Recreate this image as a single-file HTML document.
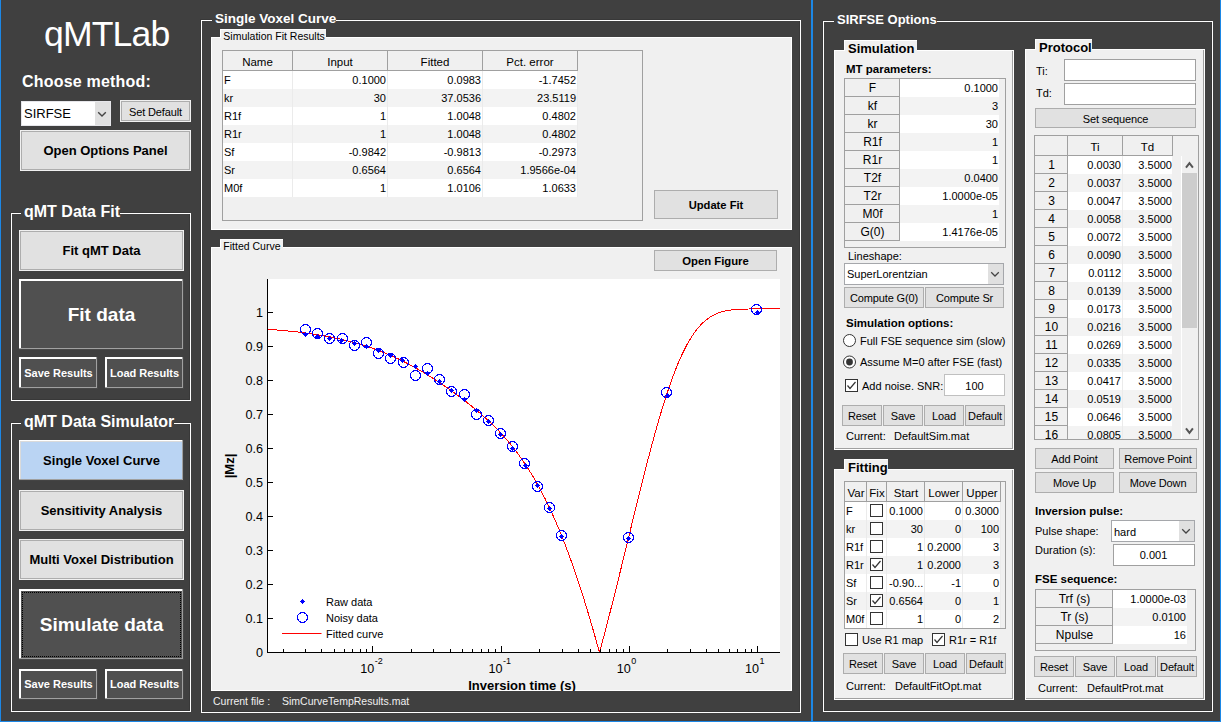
<!DOCTYPE html><html><head><meta charset="utf-8"><style>
html,body{margin:0;padding:0;}
body{width:1221px;height:722px;overflow:hidden;background:#404040;position:relative;font-family:"Liberation Sans", sans-serif;}
.t{position:absolute;white-space:nowrap;}
.r{position:absolute;}
</style></head><body>
<div class="r" style="left:0px;top:0px;width:1px;height:722px;background:#1c87e5;"></div>
<div class="r" style="left:811px;top:0px;width:2px;height:722px;background:#1c87e5;"></div>
<div class="r" style="left:1220px;top:0px;width:1px;height:722px;background:#1c87e5;"></div>
<div class="r" style="left:0px;top:721px;width:1221px;height:1px;background:#1c87e5;"></div>
<div class="t" style="left:44px;top:17.00px;font-size:35.6px;line-height:35.6px;font-weight:normal;color:#fff;letter-spacing:-0.85px">qMTLab</div>
<div class="t" style="left:22px;top:74.00px;font-size:16px;line-height:16px;font-weight:bold;color:#fff;letter-spacing:0.2px">Choose method:</div>
<div class="r" style="left:21px;top:101px;width:90px;height:25px;background:#e6e6ea;"></div>
<div class="r" style="left:22px;top:102px;width:88px;height:23px;background:#fff;"></div>
<div class="r" style="left:95px;top:102px;width:15px;height:23px;background:#e0e0e0;"></div>
<svg class="r" style="left:95px;top:108px" width="14" height="12"><polyline points="3.2,4.2 7,8 10.8,4.2" fill="none" stroke="#444" stroke-width="1.4"/></svg>
<div class="t" style="left:24px;top:107.00px;font-size:13px;line-height:13px;font-weight:normal;color:#000;">SIRFSE</div>
<div class="r" style="left:120px;top:100px;width:71px;height:22px;background:#f0f0f0;"></div>
<div class="r" style="left:121px;top:101px;width:69px;height:20px;background:#adadad;"></div>
<div class="r" style="left:122px;top:102px;width:67px;height:18px;background:#e1e1e1;"></div>
<div class="t" style="left:-44.5px;width:400px;top:107.00px;font-size:11px;line-height:11px;font-weight:normal;color:#000;text-align:center;letter-spacing:-0.15px;">Set Default</div>
<div class="r" style="left:20px;top:130px;width:171px;height:41px;background:#f0f0f0;"></div>
<div class="r" style="left:21px;top:131px;width:169px;height:39px;background:#adadad;"></div>
<div class="r" style="left:22px;top:132px;width:167px;height:37px;background:#e1e1e1;"></div>
<div class="t" style="left:-94.5px;width:400px;top:144.00px;font-size:13px;line-height:13px;font-weight:bold;color:#000;text-align:center;">Open Options Panel</div>
<div class="r" style="left:10px;top:212px;width:180px;height:188px;border:1px solid #383838;box-sizing:border-box;"></div>
<div class="r" style="left:11px;top:213px;width:180px;height:188px;border:1px solid #fff;box-sizing:border-box;"></div>
<div class="t" style="left:21px;top:204.00px;font-size:16px;line-height:16px;font-weight:bold;color:#fff;background:#404040;padding-left:3px;">qMT Data Fit</div>
<div class="r" style="left:19px;top:230px;width:165px;height:41px;background:#f0f0f0;"></div>
<div class="r" style="left:20px;top:231px;width:163px;height:39px;background:#adadad;"></div>
<div class="r" style="left:21px;top:232px;width:161px;height:37px;background:#e1e1e1;"></div>
<div class="t" style="left:-98.5px;width:400px;top:244.00px;font-size:13px;line-height:13px;font-weight:bold;color:#000;text-align:center;">Fit qMT Data</div>
<div class="r" style="left:19px;top:279px;width:165px;height:71px;background:#474747;"></div>
<div class="r" style="left:19px;top:279px;width:164px;height:70px;background:#a0a0a0;"></div>
<div class="r" style="left:19px;top:279px;width:163px;height:69px;background:#ffffff;"></div>
<div class="r" style="left:21px;top:281px;width:161px;height:67px;background:#505050;"></div>
<div class="t" style="left:-98.5px;width:400px;top:305.00px;font-size:19px;line-height:19px;font-weight:bold;color:#fff;text-align:center;">Fit data</div>
<div class="r" style="left:19px;top:357px;width:79px;height:32px;background:#474747;"></div>
<div class="r" style="left:19px;top:357px;width:78px;height:31px;background:#a0a0a0;"></div>
<div class="r" style="left:19px;top:357px;width:77px;height:30px;background:#ffffff;"></div>
<div class="r" style="left:21px;top:359px;width:75px;height:28px;background:#505050;"></div>
<div class="t" style="left:-141.5px;width:400px;top:368.00px;font-size:11px;line-height:11px;font-weight:bold;color:#fff;text-align:center;">Save Results</div>
<div class="r" style="left:105px;top:357px;width:79px;height:32px;background:#474747;"></div>
<div class="r" style="left:105px;top:357px;width:78px;height:31px;background:#a0a0a0;"></div>
<div class="r" style="left:105px;top:357px;width:77px;height:30px;background:#ffffff;"></div>
<div class="r" style="left:107px;top:359px;width:75px;height:28px;background:#505050;"></div>
<div class="t" style="left:-55.5px;width:400px;top:368.00px;font-size:11px;line-height:11px;font-weight:bold;color:#fff;text-align:center;">Load Results</div>
<div class="r" style="left:10px;top:422px;width:180px;height:289px;border:1px solid #383838;box-sizing:border-box;"></div>
<div class="r" style="left:11px;top:423px;width:180px;height:289px;border:1px solid #fff;box-sizing:border-box;"></div>
<div class="t" style="left:21px;top:414.00px;font-size:16px;line-height:16px;font-weight:bold;color:#fff;background:#404040;padding-left:3px;">qMT Data Simulator</div>
<div class="r" style="left:19px;top:440px;width:165px;height:41px;background:#444;"></div>
<div class="r" style="left:19px;top:440px;width:164px;height:40px;background:#a0a0a0;"></div>
<div class="r" style="left:19px;top:440px;width:163px;height:39px;background:#fff;"></div>
<div class="r" style="left:20px;top:441px;width:162px;height:38px;background:#dadada;"></div>
<div class="r" style="left:21px;top:442px;width:161px;height:37px;background:#bad4f3;"></div>
<div class="t" style="left:-98.5px;width:400px;top:454.00px;font-size:13px;line-height:13px;font-weight:bold;color:#000;text-align:center;">Single Voxel Curve</div>
<div class="r" style="left:19px;top:490px;width:165px;height:41px;background:#f0f0f0;"></div>
<div class="r" style="left:20px;top:491px;width:163px;height:39px;background:#adadad;"></div>
<div class="r" style="left:21px;top:492px;width:161px;height:37px;background:#e1e1e1;"></div>
<div class="t" style="left:-98.5px;width:400px;top:504.00px;font-size:13px;line-height:13px;font-weight:bold;color:#000;text-align:center;">Sensitivity Analysis</div>
<div class="r" style="left:19px;top:539px;width:165px;height:41px;background:#f0f0f0;"></div>
<div class="r" style="left:20px;top:540px;width:163px;height:39px;background:#adadad;"></div>
<div class="r" style="left:21px;top:541px;width:161px;height:37px;background:#e1e1e1;"></div>
<div class="t" style="left:-98.5px;width:400px;top:553.00px;font-size:13px;line-height:13px;font-weight:bold;color:#000;text-align:center;">Multi Voxel Distribution</div>
<div class="r" style="left:19px;top:589px;width:165px;height:71px;background:#474747;"></div>
<div class="r" style="left:19px;top:589px;width:164px;height:70px;background:#a0a0a0;"></div>
<div class="r" style="left:19px;top:589px;width:163px;height:69px;background:#ffffff;"></div>
<div class="r" style="left:21px;top:591px;width:161px;height:67px;background:#505050;"></div>
<div class="r" style="left:22px;top:592px;width:159px;height:65px;border:1px dotted #000;box-sizing:border-box;"></div>
<div class="t" style="left:-98.5px;width:400px;top:615.00px;font-size:19px;line-height:19px;font-weight:bold;color:#fff;text-align:center;">Simulate data</div>
<div class="r" style="left:19px;top:669px;width:79px;height:31px;background:#474747;"></div>
<div class="r" style="left:19px;top:669px;width:78px;height:30px;background:#a0a0a0;"></div>
<div class="r" style="left:19px;top:669px;width:77px;height:29px;background:#ffffff;"></div>
<div class="r" style="left:21px;top:671px;width:75px;height:27px;background:#505050;"></div>
<div class="t" style="left:-141.5px;width:400px;top:679.00px;font-size:11px;line-height:11px;font-weight:bold;color:#fff;text-align:center;">Save Results</div>
<div class="r" style="left:105px;top:669px;width:79px;height:31px;background:#474747;"></div>
<div class="r" style="left:105px;top:669px;width:78px;height:30px;background:#a0a0a0;"></div>
<div class="r" style="left:105px;top:669px;width:77px;height:29px;background:#ffffff;"></div>
<div class="r" style="left:107px;top:671px;width:75px;height:27px;background:#505050;"></div>
<div class="t" style="left:-55.5px;width:400px;top:679.00px;font-size:11px;line-height:11px;font-weight:bold;color:#fff;text-align:center;">Load Results</div>
<div class="r" style="left:200px;top:19px;width:600px;height:693px;border:1px solid #383838;box-sizing:border-box;"></div>
<div class="r" style="left:201px;top:20px;width:600px;height:693px;border:1px solid #fff;box-sizing:border-box;"></div>
<div class="t" style="left:212px;top:12.00px;font-size:13.5px;line-height:13.5px;font-weight:bold;color:#fff;background:#404040;padding-left:3px;">Single Voxel Curve</div>
<div class="r" style="left:211px;top:37px;width:581px;height:193px;background:#fff;"></div>
<div class="r" style="left:212px;top:38px;width:579px;height:191px;background:#f0f0f0;"></div>
<div class="r" style="left:220px;top:29px;width:106px;height:9px;background:#fff;"></div>
<div class="r" style="left:221px;top:30px;width:105px;height:9px;background:#f0f0f0;"></div>
<div class="t" style="left:223.3px;top:31.00px;font-size:10.5px;line-height:10.5px;font-weight:normal;color:#000;">Simulation Fit Results</div>
<div class="r" style="left:222px;top:50px;width:421px;height:171px;background:#f0f0f0;border:1px solid #a0a0a0;box-sizing:border-box;"></div>
<div class="r" style="left:223px;top:51px;width:355px;height:19px;background:#f0f0f0;"></div>
<div class="r" style="left:223px;top:70px;width:355px;height:1px;background:#a0a0a0;"></div>
<div class="r" style="left:292px;top:51px;width:1px;height:19px;background:#a0a0a0;"></div>
<div class="t" style="left:57.5px;width:400px;top:57.00px;font-size:11.5px;line-height:11.5px;font-weight:normal;color:#000;text-align:center;">Name</div>
<div class="r" style="left:387px;top:51px;width:1px;height:19px;background:#a0a0a0;"></div>
<div class="t" style="left:140.0px;width:400px;top:57.00px;font-size:11.5px;line-height:11.5px;font-weight:normal;color:#000;text-align:center;">Input</div>
<div class="r" style="left:482px;top:51px;width:1px;height:19px;background:#a0a0a0;"></div>
<div class="t" style="left:235.0px;width:400px;top:57.00px;font-size:11.5px;line-height:11.5px;font-weight:normal;color:#000;text-align:center;">Fitted</div>
<div class="r" style="left:577px;top:51px;width:1px;height:19px;background:#a0a0a0;"></div>
<div class="t" style="left:330.0px;width:400px;top:57.00px;font-size:11.5px;line-height:11.5px;font-weight:normal;color:#000;text-align:center;">Pct. error</div>
<div class="r" style="left:223px;top:71px;width:355px;height:18px;background:#ffffff;"></div>
<div class="r" style="left:292px;top:71px;width:1px;height:18px;background:#ebebeb;"></div>
<div class="r" style="left:387px;top:71px;width:1px;height:18px;background:#ebebeb;"></div>
<div class="r" style="left:482px;top:71px;width:1px;height:18px;background:#ebebeb;"></div>
<div class="r" style="left:577px;top:71px;width:1px;height:18px;background:#ebebeb;"></div>
<div class="t" style="left:224px;top:75.00px;font-size:11px;line-height:11px;font-weight:normal;color:#000;">F</div>
<div class="t" style="right:835px;top:75.00px;font-size:11px;line-height:11px;font-weight:normal;color:#000;text-align:right;">0.1000</div>
<div class="t" style="right:740px;top:75.00px;font-size:11px;line-height:11px;font-weight:normal;color:#000;text-align:right;">0.0983</div>
<div class="t" style="right:645px;top:75.00px;font-size:11px;line-height:11px;font-weight:normal;color:#000;text-align:right;">-1.7452</div>
<div class="r" style="left:223px;top:89px;width:355px;height:18px;background:#f3f3f3;"></div>
<div class="r" style="left:292px;top:89px;width:1px;height:18px;background:#ebebeb;"></div>
<div class="r" style="left:387px;top:89px;width:1px;height:18px;background:#ebebeb;"></div>
<div class="r" style="left:482px;top:89px;width:1px;height:18px;background:#ebebeb;"></div>
<div class="r" style="left:577px;top:89px;width:1px;height:18px;background:#ebebeb;"></div>
<div class="t" style="left:224px;top:93.00px;font-size:11px;line-height:11px;font-weight:normal;color:#000;">kr</div>
<div class="t" style="right:835px;top:93.00px;font-size:11px;line-height:11px;font-weight:normal;color:#000;text-align:right;">30</div>
<div class="t" style="right:740px;top:93.00px;font-size:11px;line-height:11px;font-weight:normal;color:#000;text-align:right;">37.0536</div>
<div class="t" style="right:645px;top:93.00px;font-size:11px;line-height:11px;font-weight:normal;color:#000;text-align:right;">23.5119</div>
<div class="r" style="left:223px;top:107px;width:355px;height:18px;background:#ffffff;"></div>
<div class="r" style="left:292px;top:107px;width:1px;height:18px;background:#ebebeb;"></div>
<div class="r" style="left:387px;top:107px;width:1px;height:18px;background:#ebebeb;"></div>
<div class="r" style="left:482px;top:107px;width:1px;height:18px;background:#ebebeb;"></div>
<div class="r" style="left:577px;top:107px;width:1px;height:18px;background:#ebebeb;"></div>
<div class="t" style="left:224px;top:111.00px;font-size:11px;line-height:11px;font-weight:normal;color:#000;">R1f</div>
<div class="t" style="right:835px;top:111.00px;font-size:11px;line-height:11px;font-weight:normal;color:#000;text-align:right;">1</div>
<div class="t" style="right:740px;top:111.00px;font-size:11px;line-height:11px;font-weight:normal;color:#000;text-align:right;">1.0048</div>
<div class="t" style="right:645px;top:111.00px;font-size:11px;line-height:11px;font-weight:normal;color:#000;text-align:right;">0.4802</div>
<div class="r" style="left:223px;top:125px;width:355px;height:18px;background:#f3f3f3;"></div>
<div class="r" style="left:292px;top:125px;width:1px;height:18px;background:#ebebeb;"></div>
<div class="r" style="left:387px;top:125px;width:1px;height:18px;background:#ebebeb;"></div>
<div class="r" style="left:482px;top:125px;width:1px;height:18px;background:#ebebeb;"></div>
<div class="r" style="left:577px;top:125px;width:1px;height:18px;background:#ebebeb;"></div>
<div class="t" style="left:224px;top:129.00px;font-size:11px;line-height:11px;font-weight:normal;color:#000;">R1r</div>
<div class="t" style="right:835px;top:129.00px;font-size:11px;line-height:11px;font-weight:normal;color:#000;text-align:right;">1</div>
<div class="t" style="right:740px;top:129.00px;font-size:11px;line-height:11px;font-weight:normal;color:#000;text-align:right;">1.0048</div>
<div class="t" style="right:645px;top:129.00px;font-size:11px;line-height:11px;font-weight:normal;color:#000;text-align:right;">0.4802</div>
<div class="r" style="left:223px;top:143px;width:355px;height:18px;background:#ffffff;"></div>
<div class="r" style="left:292px;top:143px;width:1px;height:18px;background:#ebebeb;"></div>
<div class="r" style="left:387px;top:143px;width:1px;height:18px;background:#ebebeb;"></div>
<div class="r" style="left:482px;top:143px;width:1px;height:18px;background:#ebebeb;"></div>
<div class="r" style="left:577px;top:143px;width:1px;height:18px;background:#ebebeb;"></div>
<div class="t" style="left:224px;top:147.00px;font-size:11px;line-height:11px;font-weight:normal;color:#000;">Sf</div>
<div class="t" style="right:835px;top:147.00px;font-size:11px;line-height:11px;font-weight:normal;color:#000;text-align:right;">-0.9842</div>
<div class="t" style="right:740px;top:147.00px;font-size:11px;line-height:11px;font-weight:normal;color:#000;text-align:right;">-0.9813</div>
<div class="t" style="right:645px;top:147.00px;font-size:11px;line-height:11px;font-weight:normal;color:#000;text-align:right;">-0.2973</div>
<div class="r" style="left:223px;top:161px;width:355px;height:18px;background:#f3f3f3;"></div>
<div class="r" style="left:292px;top:161px;width:1px;height:18px;background:#ebebeb;"></div>
<div class="r" style="left:387px;top:161px;width:1px;height:18px;background:#ebebeb;"></div>
<div class="r" style="left:482px;top:161px;width:1px;height:18px;background:#ebebeb;"></div>
<div class="r" style="left:577px;top:161px;width:1px;height:18px;background:#ebebeb;"></div>
<div class="t" style="left:224px;top:165.00px;font-size:11px;line-height:11px;font-weight:normal;color:#000;">Sr</div>
<div class="t" style="right:835px;top:165.00px;font-size:11px;line-height:11px;font-weight:normal;color:#000;text-align:right;">0.6564</div>
<div class="t" style="right:740px;top:165.00px;font-size:11px;line-height:11px;font-weight:normal;color:#000;text-align:right;">0.6564</div>
<div class="t" style="right:645px;top:165.00px;font-size:11px;line-height:11px;font-weight:normal;color:#000;text-align:right;">1.9566e-04</div>
<div class="r" style="left:223px;top:179px;width:355px;height:18px;background:#ffffff;"></div>
<div class="r" style="left:292px;top:179px;width:1px;height:18px;background:#ebebeb;"></div>
<div class="r" style="left:387px;top:179px;width:1px;height:18px;background:#ebebeb;"></div>
<div class="r" style="left:482px;top:179px;width:1px;height:18px;background:#ebebeb;"></div>
<div class="r" style="left:577px;top:179px;width:1px;height:18px;background:#ebebeb;"></div>
<div class="t" style="left:224px;top:183.00px;font-size:11px;line-height:11px;font-weight:normal;color:#000;">M0f</div>
<div class="t" style="right:835px;top:183.00px;font-size:11px;line-height:11px;font-weight:normal;color:#000;text-align:right;">1</div>
<div class="t" style="right:740px;top:183.00px;font-size:11px;line-height:11px;font-weight:normal;color:#000;text-align:right;">1.0106</div>
<div class="t" style="right:645px;top:183.00px;font-size:11px;line-height:11px;font-weight:normal;color:#000;text-align:right;">1.0633</div>
<div class="r" style="left:654px;top:190px;width:124px;height:29px;background:#adadad;"></div>
<div class="r" style="left:655px;top:191px;width:122px;height:27px;background:#e1e1e1;"></div>
<div class="t" style="left:516.0px;width:400px;top:200.00px;font-size:11.2px;line-height:11.2px;font-weight:bold;color:#000;text-align:center;">Update Fit</div>
<div class="r" style="left:211px;top:247px;width:581px;height:444px;background:#fff;"></div>
<div class="r" style="left:212px;top:248px;width:579px;height:442px;background:#f0f0f0;"></div>
<div class="r" style="left:220px;top:239px;width:63px;height:9px;background:#fff;"></div>
<div class="r" style="left:221px;top:240px;width:62px;height:9px;background:#f0f0f0;"></div>
<div class="t" style="left:223.3px;top:241.00px;font-size:10.5px;line-height:10.5px;font-weight:normal;color:#000;">Fitted Curve</div>
<div class="r" style="left:654px;top:250px;width:123px;height:21px;background:#adadad;"></div>
<div class="r" style="left:655px;top:251px;width:121px;height:19px;background:#e1e1e1;"></div>
<div class="t" style="left:515.5px;width:400px;top:256.00px;font-size:11.3px;line-height:11.3px;font-weight:bold;color:#000;text-align:center;">Open Figure</div>
<div class="t" style="left:213px;top:696.00px;font-size:10.5px;line-height:10.5px;font-weight:normal;color:#f0f0f0;">Current file :</div>
<div class="t" style="left:282px;top:696.00px;font-size:10.5px;line-height:10.5px;font-weight:normal;color:#f0f0f0;">SimCurveTempResults.mat</div>
<div class="r" style="left:0;top:0;width:1221px;height:691px;overflow:hidden"><svg class="r" style="left:0;top:0" width="1221" height="722" font-family='"Liberation Sans", sans-serif'><rect x="267" y="279" width="513" height="374" fill="#fff"/><clipPath id="ax"><rect x="267" y="279" width="513" height="373"/></clipPath><path d="M266.63,329.23 L267.49,329.29 L268.35,329.35 L269.20,329.41 L270.06,329.47 L270.92,329.54 L271.77,329.60 L272.63,329.66 L273.49,329.73 L274.34,329.80 L275.20,329.86 L276.05,329.93 L276.91,330.00 L277.77,330.07 L278.62,330.14 L279.48,330.22 L280.34,330.29 L281.19,330.36 L282.05,330.44 L282.91,330.51 L283.76,330.59 L284.62,330.67 L285.48,330.75 L286.33,330.83 L287.19,330.91 L288.04,331.00 L288.90,331.08 L289.76,331.17 L290.61,331.26 L291.47,331.34 L292.33,331.43 L293.18,331.53 L294.04,331.62 L294.90,331.71 L295.75,331.81 L296.61,331.90 L297.47,332.00 L298.32,332.10 L299.18,332.20 L300.03,332.30 L300.89,332.40 L301.75,332.51 L302.60,332.62 L303.46,332.72 L304.32,332.83 L305.17,332.94 L306.03,333.06 L306.89,333.17 L307.74,333.29 L308.60,333.40 L309.46,333.52 L310.31,333.64 L311.17,333.76 L312.02,333.89 L312.88,334.01 L313.74,334.14 L314.59,334.27 L315.45,334.40 L316.31,334.53 L317.16,334.67 L318.02,334.80 L318.88,334.94 L319.73,335.08 L320.59,335.22 L321.45,335.37 L322.30,335.51 L323.16,335.66 L324.01,335.81 L324.87,335.96 L325.73,336.12 L326.58,336.27 L327.44,336.43 L328.30,336.59 L329.15,336.75 L330.01,336.92 L330.87,337.08 L331.72,337.25 L332.58,337.42 L333.44,337.59 L334.29,337.77 L335.15,337.95 L336.00,338.13 L336.86,338.31 L337.72,338.50 L338.57,338.68 L339.43,338.87 L340.29,339.06 L341.14,339.26 L342.00,339.46 L342.86,339.66 L343.71,339.86 L344.57,340.06 L345.43,340.27 L346.28,340.48 L347.14,340.69 L347.99,340.91 L348.85,341.12 L349.71,341.34 L350.56,341.57 L351.42,341.79 L352.28,342.02 L353.13,342.25 L353.99,342.49 L354.85,342.72 L355.70,342.96 L356.56,343.21 L357.42,343.45 L358.27,343.70 L359.13,343.95 L359.98,344.21 L360.84,344.47 L361.70,344.73 L362.55,344.99 L363.41,345.26 L364.27,345.53 L365.12,345.80 L365.98,346.08 L366.84,346.36 L367.69,346.64 L368.55,346.92 L369.40,347.21 L370.26,347.51 L371.12,347.80 L371.97,348.10 L372.83,348.40 L373.69,348.71 L374.54,349.02 L375.40,349.33 L376.26,349.64 L377.11,349.96 L377.97,350.28 L378.83,350.61 L379.68,350.94 L380.54,351.27 L381.39,351.61 L382.25,351.95 L383.11,352.29 L383.96,352.64 L384.82,352.99 L385.68,353.34 L386.53,353.70 L387.39,354.06 L388.25,354.42 L389.10,354.79 L389.96,355.16 L390.82,355.53 L391.67,355.91 L392.53,356.29 L393.38,356.68 L394.24,357.07 L395.10,357.46 L395.95,357.86 L396.81,358.26 L397.67,358.66 L398.52,359.07 L399.38,359.48 L400.24,359.89 L401.09,360.31 L401.95,360.73 L402.81,361.15 L403.66,361.58 L404.52,362.02 L405.37,362.45 L406.23,362.89 L407.09,363.33 L407.94,363.78 L408.80,364.23 L409.66,364.68 L410.51,365.14 L411.37,365.60 L412.23,366.07 L413.08,366.53 L413.94,367.00 L414.80,367.48 L415.65,367.96 L416.51,368.44 L417.36,368.92 L418.22,369.41 L419.08,369.90 L419.93,370.40 L420.79,370.90 L421.65,371.40 L422.50,371.91 L423.36,372.42 L424.22,372.93 L425.07,373.44 L425.93,373.96 L426.79,374.48 L427.64,375.01 L428.50,375.54 L429.35,376.07 L430.21,376.60 L431.07,377.14 L431.92,377.68 L432.78,378.23 L433.64,378.78 L434.49,379.33 L435.35,379.88 L436.21,380.44 L437.06,381.00 L437.92,381.56 L438.78,382.13 L439.63,382.70 L440.49,383.27 L441.34,383.85 L442.20,384.42 L443.06,385.00 L443.91,385.59 L444.77,386.18 L445.63,386.77 L446.48,387.36 L447.34,387.96 L448.20,388.56 L449.05,389.16 L449.91,389.76 L450.77,390.37 L451.62,390.98 L452.48,391.60 L453.33,392.22 L454.19,392.84 L455.05,393.46 L455.90,394.09 L456.76,394.72 L457.62,395.35 L458.47,395.99 L459.33,396.63 L460.19,397.27 L461.04,397.92 L461.90,398.57 L462.76,399.22 L463.61,399.88 L464.47,400.54 L465.32,401.20 L466.18,401.87 L467.04,402.54 L467.89,403.21 L468.75,403.89 L469.61,404.58 L470.46,405.26 L471.32,405.95 L472.18,406.65 L473.03,407.35 L473.89,408.05 L474.75,408.76 L475.60,409.47 L476.46,410.19 L477.31,410.91 L478.17,411.64 L479.03,412.37 L479.88,413.11 L480.74,413.85 L481.60,414.60 L482.45,415.36 L483.31,416.12 L484.17,416.88 L485.02,417.65 L485.88,418.43 L486.74,419.22 L487.59,420.01 L488.45,420.80 L489.30,421.61 L490.16,422.42 L491.02,423.24 L491.87,424.07 L492.73,424.90 L493.59,425.74 L494.44,426.59 L495.30,427.45 L496.16,428.32 L497.01,429.19 L497.87,430.07 L498.73,430.97 L499.58,431.87 L500.44,432.78 L501.29,433.70 L502.15,434.63 L503.01,435.57 L503.86,436.52 L504.72,437.49 L505.58,438.46 L506.43,439.44 L507.29,440.44 L508.15,441.44 L509.00,442.46 L509.86,443.49 L510.72,444.53 L511.57,445.58 L512.43,446.65 L513.28,447.73 L514.14,448.82 L515.00,449.92 L515.85,451.04 L516.71,452.17 L517.57,453.32 L518.42,454.48 L519.28,455.65 L520.14,456.84 L520.99,458.05 L521.85,459.26 L522.71,460.50 L523.56,461.75 L524.42,463.01 L525.27,464.29 L526.13,465.59 L526.99,466.90 L527.84,468.23 L528.70,469.57 L529.56,470.93 L530.41,472.31 L531.27,473.71 L532.13,475.12 L532.98,476.55 L533.84,478.00 L534.70,479.47 L535.55,480.96 L536.41,482.46 L537.26,483.98 L538.12,485.52 L538.98,487.08 L539.83,488.66 L540.69,490.26 L541.55,491.88 L542.40,493.51 L543.26,495.17 L544.12,496.85 L544.97,498.55 L545.83,500.26 L546.69,502.00 L547.54,503.76 L548.40,505.54 L549.25,507.34 L550.11,509.16 L550.97,511.00 L551.82,512.87 L552.68,514.75 L553.54,516.66 L554.39,518.59 L555.25,520.54 L556.11,522.51 L556.96,524.51 L557.82,526.52 L558.68,528.56 L559.53,530.63 L560.39,532.71 L561.24,534.82 L562.10,536.95 L562.96,539.10 L563.81,541.28 L564.67,543.48 L565.53,545.70 L566.38,547.95 L567.24,550.22 L568.10,552.51 L568.95,554.83 L569.81,557.17 L570.67,559.53 L571.52,561.92 L572.38,564.33 L573.23,566.76 L574.09,569.22 L574.95,571.70 L575.80,574.21 L576.66,576.74 L577.52,579.29 L578.37,581.87 L579.23,584.47 L580.09,587.09 L580.94,589.74 L581.80,592.41 L582.66,595.10 L583.51,597.82 L584.37,600.56 L585.22,603.32 L586.08,606.11 L586.94,608.92 L587.79,611.75 L588.65,614.61 L589.51,617.48 L590.36,620.38 L591.22,623.31 L592.08,626.25 L592.93,629.22 L593.79,632.21 L594.65,635.21 L595.50,638.25 L596.36,641.30 L597.21,644.37 L598.07,647.46 L598.93,650.57 L599.45,652.50 L599.78,651.29 L600.64,648.14 L601.50,644.97 L602.35,641.78 L603.21,638.57 L604.07,635.35 L604.92,632.10 L605.78,628.84 L606.64,625.56 L607.49,622.27 L608.35,618.96 L609.20,615.63 L610.06,612.29 L610.92,608.94 L611.77,605.57 L612.63,602.18 L613.49,598.79 L614.34,595.38 L615.20,591.96 L616.06,588.53 L616.91,585.09 L617.77,581.64 L618.63,578.17 L619.48,574.70 L620.34,571.23 L621.19,567.74 L622.05,564.25 L622.91,560.75 L623.76,557.25 L624.62,553.74 L625.48,550.23 L626.33,546.72 L627.19,543.20 L628.05,539.68 L628.90,536.16 L629.76,532.65 L630.62,529.13 L631.47,525.62 L632.33,522.11 L633.18,518.60 L634.04,515.09 L634.90,511.60 L635.75,508.11 L636.61,504.62 L637.47,501.15 L638.32,497.68 L639.18,494.23 L640.04,490.78 L640.89,487.35 L641.75,483.93 L642.61,480.53 L643.46,477.14 L644.32,473.76 L645.17,470.41 L646.03,467.07 L646.89,463.75 L647.74,460.45 L648.60,457.17 L649.46,453.91 L650.31,450.68 L651.17,447.46 L652.03,444.28 L652.88,441.12 L653.74,437.98 L654.60,434.88 L655.45,431.80 L656.31,428.75 L657.16,425.73 L658.02,422.74 L658.88,419.78 L659.73,416.86 L660.59,413.97 L661.45,411.12 L662.30,408.30 L663.16,405.51 L664.02,402.76 L664.87,400.05 L665.73,397.38 L666.59,394.75 L667.44,392.15 L668.30,389.60 L669.15,387.09 L670.01,384.61 L670.87,382.18 L671.72,379.79 L672.58,377.45 L673.44,375.14 L674.29,372.89 L675.15,370.67 L676.01,368.50 L676.86,366.37 L677.72,364.29 L678.58,362.25 L679.43,360.26 L680.29,358.31 L681.14,356.41 L682.00,354.56 L682.86,352.74 L683.71,350.98 L684.57,349.26 L685.43,347.58 L686.28,345.95 L687.14,344.37 L688.00,342.83 L688.85,341.34 L689.71,339.88 L690.57,338.48 L691.42,337.11 L692.28,335.79 L693.13,334.52 L693.99,333.28 L694.85,332.09 L695.70,330.93 L696.56,329.82 L697.42,328.75 L698.27,327.72 L699.13,326.73 L699.99,325.77 L700.84,324.85 L701.70,323.97 L702.56,323.13 L703.41,322.32 L704.27,321.55 L705.12,320.80 L705.98,320.10 L706.84,319.42 L707.69,318.78 L708.55,318.16 L709.41,317.58 L710.26,317.02 L711.12,316.49 L711.98,315.99 L712.83,315.52 L713.69,315.07 L714.55,314.64 L715.40,314.24 L716.26,313.86 L717.11,313.50 L717.97,313.16 L718.83,312.85 L719.68,312.55 L720.54,312.27 L721.40,312.01 L722.25,311.76 L723.11,311.53 L723.97,311.32 L724.82,311.12 L725.68,310.93 L726.54,310.76 L727.39,310.60 L728.25,310.45 L729.10,310.31 L729.96,310.19 L730.82,310.07 L731.67,309.96 L732.53,309.86 L733.39,309.77 L734.24,309.68 L735.10,309.61 L735.96,309.54 L736.81,309.47 L737.67,309.41 L738.53,309.36 L739.38,309.31 L740.24,309.26 L741.09,309.22 L741.95,309.19 L742.81,309.16 L743.66,309.13 L744.52,309.10 L745.38,309.08 L746.23,309.05 L747.09,309.04 L747.95,309.02 L748.80,309.00 L749.66,308.99 L750.52,308.98 L751.37,308.97 L752.23,308.96 L753.08,308.95 L753.94,308.94 L754.80,308.94 L755.65,308.93 L756.51,308.93 L757.37,308.92 L758.22,308.92 L759.08,308.91 L759.94,308.91 L760.79,308.91 L761.65,308.91 L762.51,308.91 L763.36,308.90 L764.22,308.90 L765.07,308.90 L765.93,308.90 L766.79,308.90 L767.64,308.90 L768.50,308.90 L769.36,308.90 L770.21,308.90 L771.07,308.90 L771.93,308.90 L772.78,308.90 L773.64,308.90 L774.50,308.90 L775.35,308.90 L776.21,308.90 L777.06,308.90 L777.92,308.90 L778.78,308.90 L779.63,308.90" fill="none" stroke="#ff0000" stroke-width="1" clip-path="url(#ax)" shape-rendering="crispEdges"/><path d="M305.5,331.9 L308.1,334.5 L305.5,337.1 L302.9,334.5 Z" fill="#0000ff" shape-rendering="crispEdges"/><path d="M317.5,333.9 L320.1,336.5 L317.5,339.1 L314.9,336.5 Z" fill="#0000ff" shape-rendering="crispEdges"/><path d="M329.5,335.9 L332.1,338.5 L329.5,341.1 L326.9,338.5 Z" fill="#0000ff" shape-rendering="crispEdges"/><path d="M341.5,337.9 L344.1,340.5 L341.5,343.1 L338.9,340.5 Z" fill="#0000ff" shape-rendering="crispEdges"/><path d="M354.5,340.9 L357.1,343.5 L354.5,346.1 L351.9,343.5 Z" fill="#0000ff" shape-rendering="crispEdges"/><path d="M366.5,343.9 L369.1,346.5 L366.5,349.1 L363.9,346.5 Z" fill="#0000ff" shape-rendering="crispEdges"/><path d="M378.5,347.9 L381.1,350.5 L378.5,353.1 L375.9,350.5 Z" fill="#0000ff" shape-rendering="crispEdges"/><path d="M390.5,352.9 L393.1,355.5 L390.5,358.1 L387.9,355.5 Z" fill="#0000ff" shape-rendering="crispEdges"/><path d="M402.5,357.9 L405.1,360.5 L402.5,363.1 L399.9,360.5 Z" fill="#0000ff" shape-rendering="crispEdges"/><path d="M415.5,363.9 L418.1,366.5 L415.5,369.1 L412.9,366.5 Z" fill="#0000ff" shape-rendering="crispEdges"/><path d="M427.5,370.9 L430.1,373.5 L427.5,376.1 L424.9,373.5 Z" fill="#0000ff" shape-rendering="crispEdges"/><path d="M439.5,378.9 L442.1,381.5 L439.5,384.1 L436.9,381.5 Z" fill="#0000ff" shape-rendering="crispEdges"/><path d="M451.5,387.9 L454.1,390.5 L451.5,393.1 L448.9,390.5 Z" fill="#0000ff" shape-rendering="crispEdges"/><path d="M464.5,396.9 L467.1,399.5 L464.5,402.1 L461.9,399.5 Z" fill="#0000ff" shape-rendering="crispEdges"/><path d="M476.5,407.9 L479.1,410.5 L476.5,413.1 L473.9,410.5 Z" fill="#0000ff" shape-rendering="crispEdges"/><path d="M488.5,418.9 L491.1,421.5 L488.5,424.1 L485.9,421.5 Z" fill="#0000ff" shape-rendering="crispEdges"/><path d="M500.5,431.9 L503.1,434.5 L500.5,437.1 L497.9,434.5 Z" fill="#0000ff" shape-rendering="crispEdges"/><path d="M512.5,445.9 L515.1,448.5 L512.5,451.1 L509.9,448.5 Z" fill="#0000ff" shape-rendering="crispEdges"/><path d="M525.5,462.9 L528.1,465.5 L525.5,468.1 L522.9,465.5 Z" fill="#0000ff" shape-rendering="crispEdges"/><path d="M537.5,482.9 L540.1,485.5 L537.5,488.1 L534.9,485.5 Z" fill="#0000ff" shape-rendering="crispEdges"/><path d="M549.5,505.9 L552.1,508.5 L549.5,511.1 L546.9,508.5 Z" fill="#0000ff" shape-rendering="crispEdges"/><path d="M561.5,533.9 L564.1,536.5 L561.5,539.1 L558.9,536.5 Z" fill="#0000ff" shape-rendering="crispEdges"/><path d="M628.5,535.9 L631.1,538.5 L628.5,541.1 L625.9,538.5 Z" fill="#0000ff" shape-rendering="crispEdges"/><path d="M667.5,392.9 L670.1,395.5 L667.5,398.1 L664.9,395.5 Z" fill="#0000ff" shape-rendering="crispEdges"/><path d="M757.5,309.9 L760.1,312.5 L757.5,315.1 L754.9,312.5 Z" fill="#0000ff" shape-rendering="crispEdges"/><circle cx="305.5" cy="329.5" r="5" fill="none" stroke="#0000ff" stroke-width="1" shape-rendering="crispEdges"/><circle cx="317.5" cy="333.5" r="5" fill="none" stroke="#0000ff" stroke-width="1" shape-rendering="crispEdges"/><circle cx="329.5" cy="338.5" r="5" fill="none" stroke="#0000ff" stroke-width="1" shape-rendering="crispEdges"/><circle cx="342.5" cy="338.5" r="5" fill="none" stroke="#0000ff" stroke-width="1" shape-rendering="crispEdges"/><circle cx="354.5" cy="345.5" r="5" fill="none" stroke="#0000ff" stroke-width="1" shape-rendering="crispEdges"/><circle cx="366.5" cy="342.5" r="5" fill="none" stroke="#0000ff" stroke-width="1" shape-rendering="crispEdges"/><circle cx="378.5" cy="353.5" r="5" fill="none" stroke="#0000ff" stroke-width="1" shape-rendering="crispEdges"/><circle cx="390.5" cy="358.5" r="5" fill="none" stroke="#0000ff" stroke-width="1" shape-rendering="crispEdges"/><circle cx="403.5" cy="362.5" r="5" fill="none" stroke="#0000ff" stroke-width="1" shape-rendering="crispEdges"/><circle cx="415.5" cy="375.5" r="5" fill="none" stroke="#0000ff" stroke-width="1" shape-rendering="crispEdges"/><circle cx="427.5" cy="368.5" r="5" fill="none" stroke="#0000ff" stroke-width="1" shape-rendering="crispEdges"/><circle cx="439.5" cy="379.5" r="5" fill="none" stroke="#0000ff" stroke-width="1" shape-rendering="crispEdges"/><circle cx="451.5" cy="391.5" r="5" fill="none" stroke="#0000ff" stroke-width="1" shape-rendering="crispEdges"/><circle cx="464.5" cy="394.5" r="5" fill="none" stroke="#0000ff" stroke-width="1" shape-rendering="crispEdges"/><circle cx="476.5" cy="414.5" r="5" fill="none" stroke="#0000ff" stroke-width="1" shape-rendering="crispEdges"/><circle cx="488.5" cy="420.5" r="5" fill="none" stroke="#0000ff" stroke-width="1" shape-rendering="crispEdges"/><circle cx="500.5" cy="433.5" r="5" fill="none" stroke="#0000ff" stroke-width="1" shape-rendering="crispEdges"/><circle cx="512.5" cy="446.5" r="5" fill="none" stroke="#0000ff" stroke-width="1" shape-rendering="crispEdges"/><circle cx="524.5" cy="463.5" r="5" fill="none" stroke="#0000ff" stroke-width="1" shape-rendering="crispEdges"/><circle cx="537.5" cy="486.5" r="5" fill="none" stroke="#0000ff" stroke-width="1" shape-rendering="crispEdges"/><circle cx="549.5" cy="507.5" r="5" fill="none" stroke="#0000ff" stroke-width="1" shape-rendering="crispEdges"/><circle cx="561.5" cy="535.5" r="5" fill="none" stroke="#0000ff" stroke-width="1" shape-rendering="crispEdges"/><circle cx="628.5" cy="537.5" r="5" fill="none" stroke="#0000ff" stroke-width="1" shape-rendering="crispEdges"/><circle cx="666.5" cy="392.5" r="5" fill="none" stroke="#0000ff" stroke-width="1" shape-rendering="crispEdges"/><circle cx="756.5" cy="309.5" r="5" fill="none" stroke="#0000ff" stroke-width="1" shape-rendering="crispEdges"/><path d="M267.5,279 V652.5 H780" fill="none" stroke="#000" stroke-width="1"/><path d="M267,652.5 h6" stroke="#000" stroke-width="1"/><text x="263" y="657.1" font-size="12.6" text-anchor="end" fill="#000">0</text><path d="M267,618.5 h6" stroke="#000" stroke-width="1"/><text x="263" y="623.1" font-size="12.6" text-anchor="end" fill="#000">0.1</text><path d="M267,584.5 h6" stroke="#000" stroke-width="1"/><text x="263" y="589.1" font-size="12.6" text-anchor="end" fill="#000">0.2</text><path d="M267,550.5 h6" stroke="#000" stroke-width="1"/><text x="263" y="555.1" font-size="12.6" text-anchor="end" fill="#000">0.3</text><path d="M267,516.5 h6" stroke="#000" stroke-width="1"/><text x="263" y="521.1" font-size="12.6" text-anchor="end" fill="#000">0.4</text><path d="M267,482.5 h6" stroke="#000" stroke-width="1"/><text x="263" y="487.1" font-size="12.6" text-anchor="end" fill="#000">0.5</text><path d="M267,448.5 h6" stroke="#000" stroke-width="1"/><text x="263" y="453.1" font-size="12.6" text-anchor="end" fill="#000">0.6</text><path d="M267,414.5 h6" stroke="#000" stroke-width="1"/><text x="263" y="419.1" font-size="12.6" text-anchor="end" fill="#000">0.7</text><path d="M267,380.5 h6" stroke="#000" stroke-width="1"/><text x="263" y="385.1" font-size="12.6" text-anchor="end" fill="#000">0.8</text><path d="M267,346.5 h6" stroke="#000" stroke-width="1"/><text x="263" y="351.1" font-size="12.6" text-anchor="end" fill="#000">0.9</text><path d="M267,312.5 h6" stroke="#000" stroke-width="1"/><text x="263" y="317.1" font-size="12.6" text-anchor="end" fill="#000">1</text><path d="M283.5,652 v-3" stroke="#000" stroke-width="1"/><path d="M305.5,652 v-3" stroke="#000" stroke-width="1"/><path d="M321.5,652 v-3" stroke="#000" stroke-width="1"/><path d="M334.5,652 v-3" stroke="#000" stroke-width="1"/><path d="M344.5,652 v-3" stroke="#000" stroke-width="1"/><path d="M352.5,652 v-3" stroke="#000" stroke-width="1"/><path d="M360.5,652 v-3" stroke="#000" stroke-width="1"/><path d="M366.5,652 v-3" stroke="#000" stroke-width="1"/><path d="M372.5,652 v-6" stroke="#000" stroke-width="1"/><path d="M411.5,652 v-3" stroke="#000" stroke-width="1"/><path d="M433.5,652 v-3" stroke="#000" stroke-width="1"/><path d="M450.5,652 v-3" stroke="#000" stroke-width="1"/><path d="M462.5,652 v-3" stroke="#000" stroke-width="1"/><path d="M472.5,652 v-3" stroke="#000" stroke-width="1"/><path d="M481.5,652 v-3" stroke="#000" stroke-width="1"/><path d="M488.5,652 v-3" stroke="#000" stroke-width="1"/><path d="M495.5,652 v-3" stroke="#000" stroke-width="1"/><path d="M501.5,652 v-6" stroke="#000" stroke-width="1"/><path d="M539.5,652 v-3" stroke="#000" stroke-width="1"/><path d="M562.5,652 v-3" stroke="#000" stroke-width="1"/><path d="M578.5,652 v-3" stroke="#000" stroke-width="1"/><path d="M590.5,652 v-3" stroke="#000" stroke-width="1"/><path d="M600.5,652 v-3" stroke="#000" stroke-width="1"/><path d="M609.5,652 v-3" stroke="#000" stroke-width="1"/><path d="M616.5,652 v-3" stroke="#000" stroke-width="1"/><path d="M623.5,652 v-3" stroke="#000" stroke-width="1"/><path d="M629.5,652 v-6" stroke="#000" stroke-width="1"/><path d="M667.5,652 v-3" stroke="#000" stroke-width="1"/><path d="M690.5,652 v-3" stroke="#000" stroke-width="1"/><path d="M706.5,652 v-3" stroke="#000" stroke-width="1"/><path d="M718.5,652 v-3" stroke="#000" stroke-width="1"/><path d="M729.5,652 v-3" stroke="#000" stroke-width="1"/><path d="M737.5,652 v-3" stroke="#000" stroke-width="1"/><path d="M745.5,652 v-3" stroke="#000" stroke-width="1"/><path d="M751.5,652 v-3" stroke="#000" stroke-width="1"/><path d="M757.5,652 v-6" stroke="#000" stroke-width="1"/><text x="374.3" y="673" font-size="12.6" text-anchor="end" fill="#000">10</text><text x="374.8" y="664" font-size="9" fill="#000">-2</text><text x="502.6" y="673" font-size="12.6" text-anchor="end" fill="#000">10</text><text x="503.1" y="664" font-size="9" fill="#000">-1</text><text x="630.8" y="673" font-size="12.6" text-anchor="end" fill="#000">10</text><text x="631.3" y="664" font-size="9" fill="#000">0</text><text x="759.0" y="673" font-size="12.6" text-anchor="end" fill="#000">10</text><text x="759.5" y="664" font-size="9" fill="#000">1</text><text x="522" y="690" font-size="13" font-weight="bold" text-anchor="middle" fill="#000">Inversion time (s)</text><text transform="translate(234,466) rotate(-90)" font-size="13" font-weight="bold" text-anchor="middle" fill="#000">|Mz|</text><path d="M302.5,598.9 L305.1,601.5 L302.5,604.1 L299.9,601.5 Z" fill="#0000ff" shape-rendering="crispEdges"/><circle cx="302.5" cy="617.5" r="5" fill="none" stroke="#0000ff" stroke-width="1" shape-rendering="crispEdges"/><path d="M282,633.5 H321.5" stroke="#ff0000" stroke-width="1"/><text x="326" y="606" font-size="11" fill="#000">Raw data</text><text x="326" y="622" font-size="11" fill="#000">Noisy data</text><text x="326" y="638" font-size="11" fill="#000">Fitted curve</text></svg></div>
<div class="r" style="left:822px;top:20px;width:390px;height:691px;border:1px solid #383838;box-sizing:border-box;"></div>
<div class="r" style="left:823px;top:21px;width:390px;height:691px;border:1px solid #fff;box-sizing:border-box;"></div>
<div class="t" style="left:834px;top:13.00px;font-size:13px;line-height:13px;font-weight:bold;color:#fff;background:#404040;padding-left:3px;">SIRFSE Options</div>
<div class="r" style="left:834px;top:50px;width:180px;height:400px;background:#fff;"></div>
<div class="r" style="left:835px;top:51px;width:178px;height:398px;background:#a0a0a0;"></div>
<div class="r" style="left:835px;top:51px;width:177px;height:397px;background:#f0f0f0;"></div>
<div class="r" style="left:844px;top:40px;width:73px;height:11px;background:#fff;"></div>
<div class="r" style="left:845px;top:41px;width:72px;height:11px;background:#f0f0f0;"></div>
<div class="t" style="left:848px;top:42.00px;font-size:13px;line-height:13px;font-weight:bold;color:#000;">Simulation</div>
<div class="t" style="left:846px;top:64.00px;font-size:11.5px;line-height:11.5px;font-weight:bold;color:#000;">MT parameters:</div>
<div class="r" style="left:844px;top:78px;width:162px;height:170px;background:#f0f0f0;border:1px solid #a0a0a0;box-sizing:border-box;"></div>
<div class="r" style="left:845px;top:79px;width:55px;height:18px;background:#f0f0f0;border-right:1px solid #a0a0a0;border-bottom:1px solid #a0a0a0;box-sizing:border-box;"></div>
<div class="r" style="left:900px;top:79px;width:99px;height:18px;background:#ffffff;"></div>
<div class="t" style="left:672.5px;width:400px;top:82.00px;font-size:12px;line-height:12px;font-weight:normal;color:#000;text-align:center;">F</div>
<div class="t" style="right:223px;top:83.00px;font-size:11px;line-height:11px;font-weight:normal;color:#000;text-align:right;">0.1000</div>
<div class="r" style="left:845px;top:97px;width:55px;height:18px;background:#f0f0f0;border-right:1px solid #a0a0a0;border-bottom:1px solid #a0a0a0;box-sizing:border-box;"></div>
<div class="r" style="left:900px;top:97px;width:99px;height:18px;background:#f3f3f3;"></div>
<div class="t" style="left:672.5px;width:400px;top:100.00px;font-size:12px;line-height:12px;font-weight:normal;color:#000;text-align:center;">kf</div>
<div class="t" style="right:223px;top:101.00px;font-size:11px;line-height:11px;font-weight:normal;color:#000;text-align:right;">3</div>
<div class="r" style="left:845px;top:115px;width:55px;height:18px;background:#f0f0f0;border-right:1px solid #a0a0a0;border-bottom:1px solid #a0a0a0;box-sizing:border-box;"></div>
<div class="r" style="left:900px;top:115px;width:99px;height:18px;background:#ffffff;"></div>
<div class="t" style="left:672.5px;width:400px;top:118.00px;font-size:12px;line-height:12px;font-weight:normal;color:#000;text-align:center;">kr</div>
<div class="t" style="right:223px;top:119.00px;font-size:11px;line-height:11px;font-weight:normal;color:#000;text-align:right;">30</div>
<div class="r" style="left:845px;top:133px;width:55px;height:18px;background:#f0f0f0;border-right:1px solid #a0a0a0;border-bottom:1px solid #a0a0a0;box-sizing:border-box;"></div>
<div class="r" style="left:900px;top:133px;width:99px;height:18px;background:#f3f3f3;"></div>
<div class="t" style="left:672.5px;width:400px;top:136.00px;font-size:12px;line-height:12px;font-weight:normal;color:#000;text-align:center;">R1f</div>
<div class="t" style="right:223px;top:137.00px;font-size:11px;line-height:11px;font-weight:normal;color:#000;text-align:right;">1</div>
<div class="r" style="left:845px;top:151px;width:55px;height:18px;background:#f0f0f0;border-right:1px solid #a0a0a0;border-bottom:1px solid #a0a0a0;box-sizing:border-box;"></div>
<div class="r" style="left:900px;top:151px;width:99px;height:18px;background:#ffffff;"></div>
<div class="t" style="left:672.5px;width:400px;top:154.00px;font-size:12px;line-height:12px;font-weight:normal;color:#000;text-align:center;">R1r</div>
<div class="t" style="right:223px;top:155.00px;font-size:11px;line-height:11px;font-weight:normal;color:#000;text-align:right;">1</div>
<div class="r" style="left:845px;top:169px;width:55px;height:18px;background:#f0f0f0;border-right:1px solid #a0a0a0;border-bottom:1px solid #a0a0a0;box-sizing:border-box;"></div>
<div class="r" style="left:900px;top:169px;width:99px;height:18px;background:#f3f3f3;"></div>
<div class="t" style="left:672.5px;width:400px;top:172.00px;font-size:12px;line-height:12px;font-weight:normal;color:#000;text-align:center;">T2f</div>
<div class="t" style="right:223px;top:173.00px;font-size:11px;line-height:11px;font-weight:normal;color:#000;text-align:right;">0.0400</div>
<div class="r" style="left:845px;top:187px;width:55px;height:18px;background:#f0f0f0;border-right:1px solid #a0a0a0;border-bottom:1px solid #a0a0a0;box-sizing:border-box;"></div>
<div class="r" style="left:900px;top:187px;width:99px;height:18px;background:#ffffff;"></div>
<div class="t" style="left:672.5px;width:400px;top:190.00px;font-size:12px;line-height:12px;font-weight:normal;color:#000;text-align:center;">T2r</div>
<div class="t" style="right:223px;top:191.00px;font-size:11px;line-height:11px;font-weight:normal;color:#000;text-align:right;">1.0000e-05</div>
<div class="r" style="left:845px;top:205px;width:55px;height:18px;background:#f0f0f0;border-right:1px solid #a0a0a0;border-bottom:1px solid #a0a0a0;box-sizing:border-box;"></div>
<div class="r" style="left:900px;top:205px;width:99px;height:18px;background:#f3f3f3;"></div>
<div class="t" style="left:672.5px;width:400px;top:208.00px;font-size:12px;line-height:12px;font-weight:normal;color:#000;text-align:center;">M0f</div>
<div class="t" style="right:223px;top:209.00px;font-size:11px;line-height:11px;font-weight:normal;color:#000;text-align:right;">1</div>
<div class="r" style="left:845px;top:223px;width:55px;height:18px;background:#f0f0f0;border-right:1px solid #a0a0a0;border-bottom:1px solid #a0a0a0;box-sizing:border-box;"></div>
<div class="r" style="left:900px;top:223px;width:99px;height:18px;background:#ffffff;"></div>
<div class="t" style="left:672.5px;width:400px;top:226.00px;font-size:12px;line-height:12px;font-weight:normal;color:#000;text-align:center;">G(0)</div>
<div class="t" style="right:223px;top:227.00px;font-size:11px;line-height:11px;font-weight:normal;color:#000;text-align:right;">1.4176e-05</div>
<div class="t" style="left:848px;top:251.00px;font-size:11px;line-height:11px;font-weight:normal;color:#000;">Lineshape:</div>
<div class="r" style="left:844px;top:263px;width:160px;height:22px;background:#fff;border:1px solid #a5a7ab;box-sizing:border-box;"></div>
<div class="r" style="left:988px;top:264px;width:15px;height:20px;background:#e0e0e0;"></div>
<svg class="r" style="left:988px;top:268px" width="14" height="12"><polyline points="3.2,4.2 7,8 10.8,4.2" fill="none" stroke="#444" stroke-width="1.25"/></svg>
<div class="t" style="left:847px;top:269.00px;font-size:11px;line-height:11px;font-weight:normal;color:#000;">SuperLorentzian</div>
<div class="r" style="left:844px;top:287px;width:80px;height:21px;background:#adadad;"></div>
<div class="r" style="left:845px;top:288px;width:78px;height:19px;background:#e1e1e1;"></div>
<div class="t" style="left:684.0px;width:400px;top:293.00px;font-size:11px;line-height:11px;font-weight:normal;color:#000;text-align:center;letter-spacing:-0.15px;">Compute G(0)</div>
<div class="r" style="left:925px;top:287px;width:79px;height:21px;background:#adadad;"></div>
<div class="r" style="left:926px;top:288px;width:77px;height:19px;background:#e1e1e1;"></div>
<div class="t" style="left:764.5px;width:400px;top:293.00px;font-size:11px;line-height:11px;font-weight:normal;color:#000;text-align:center;letter-spacing:-0.15px;">Compute Sr</div>
<div class="t" style="left:846px;top:318.00px;font-size:11.5px;line-height:11.5px;font-weight:bold;color:#000;">Simulation options:</div>
<svg class="r" style="left:842px;top:333px" width="16" height="36"><circle cx="7.5" cy="7.5" r="6" fill="#fff" stroke="#333" stroke-width="1"/><circle cx="7.5" cy="29" r="6" fill="#fff" stroke="#333" stroke-width="1"/><circle cx="7.5" cy="29" r="3.4" fill="#333"/></svg>
<div class="t" style="left:860px;top:336.00px;font-size:11px;line-height:11px;font-weight:normal;color:#000;">Full FSE sequence sim (slow)</div>
<div class="t" style="left:860px;top:357.00px;font-size:11px;line-height:11px;font-weight:normal;color:#000;">Assume M=0 after FSE (fast)</div>
<div class="r" style="left:845px;top:379px;width:13px;height:13px;background:#fff;border:1px solid #333;box-sizing:border-box;"></div>
<svg class="r" style="left:845px;top:379px" width="13" height="13"><polyline points="2.5,6.5 5,9.5 10.5,3" fill="none" stroke="#333" stroke-width="1.2"/></svg>
<div class="t" style="left:862px;top:381.00px;font-size:11px;line-height:11px;font-weight:normal;color:#000;">Add noise. SNR:</div>
<div class="r" style="left:944px;top:374px;width:61px;height:22px;background:#fff;border:1px solid #c0c0c0;box-sizing:border-box;"></div>
<div class="t" style="left:774.5px;width:400px;top:381.00px;font-size:11px;line-height:11px;font-weight:normal;color:#000;text-align:center;">100</div>
<div class="r" style="left:842px;top:405px;width:40px;height:21px;background:#adadad;"></div>
<div class="r" style="left:843px;top:406px;width:38px;height:19px;background:#e1e1e1;"></div>
<div class="t" style="left:662.0px;width:400px;top:411.00px;font-size:11px;line-height:11px;font-weight:normal;color:#000;text-align:center;letter-spacing:-0.15px;">Reset</div>
<div class="r" style="left:883px;top:405px;width:40px;height:21px;background:#adadad;"></div>
<div class="r" style="left:884px;top:406px;width:38px;height:19px;background:#e1e1e1;"></div>
<div class="t" style="left:703.0px;width:400px;top:411.00px;font-size:11px;line-height:11px;font-weight:normal;color:#000;text-align:center;letter-spacing:-0.15px;">Save</div>
<div class="r" style="left:924px;top:405px;width:40px;height:21px;background:#adadad;"></div>
<div class="r" style="left:925px;top:406px;width:38px;height:19px;background:#e1e1e1;"></div>
<div class="t" style="left:744.0px;width:400px;top:411.00px;font-size:11px;line-height:11px;font-weight:normal;color:#000;text-align:center;letter-spacing:-0.15px;">Load</div>
<div class="r" style="left:965px;top:405px;width:40px;height:21px;background:#adadad;"></div>
<div class="r" style="left:966px;top:406px;width:38px;height:19px;background:#e1e1e1;"></div>
<div class="t" style="left:785.0px;width:400px;top:411.00px;font-size:11px;line-height:11px;font-weight:normal;color:#000;text-align:center;letter-spacing:-0.15px;">Default</div>
<div class="t" style="left:846px;top:431.00px;font-size:11px;line-height:11px;font-weight:normal;color:#000;">Current:</div>
<div class="t" style="left:894px;top:431.00px;font-size:11px;line-height:11px;font-weight:normal;color:#000;">DefaultSim.mat</div>
<div class="r" style="left:834px;top:469px;width:180px;height:231px;background:#fff;"></div>
<div class="r" style="left:835px;top:470px;width:178px;height:229px;background:#a0a0a0;"></div>
<div class="r" style="left:835px;top:470px;width:177px;height:228px;background:#f0f0f0;"></div>
<div class="r" style="left:844px;top:459px;width:44px;height:11px;background:#fff;"></div>
<div class="r" style="left:845px;top:460px;width:43px;height:11px;background:#f0f0f0;"></div>
<div class="t" style="left:848px;top:461.00px;font-size:13px;line-height:13px;font-weight:bold;color:#000;">Fitting</div>
<div class="r" style="left:844px;top:481px;width:162px;height:148px;background:#f0f0f0;border:1px solid #a0a0a0;box-sizing:border-box;"></div>
<div class="r" style="left:845px;top:482px;width:156px;height:19px;background:#f0f0f0;"></div>
<div class="r" style="left:845px;top:501px;width:156px;height:1px;background:#a0a0a0;"></div>
<div class="r" style="left:866px;top:482px;width:1px;height:19px;background:#a0a0a0;"></div>
<div class="t" style="left:656.0px;width:400px;top:488.00px;font-size:11.5px;line-height:11.5px;font-weight:normal;color:#000;text-align:center;">Var</div>
<div class="r" style="left:886px;top:482px;width:1px;height:19px;background:#a0a0a0;"></div>
<div class="t" style="left:677.0px;width:400px;top:488.00px;font-size:11.5px;line-height:11.5px;font-weight:normal;color:#000;text-align:center;">Fix</div>
<div class="r" style="left:924px;top:482px;width:1px;height:19px;background:#a0a0a0;"></div>
<div class="t" style="left:706.0px;width:400px;top:488.00px;font-size:11.5px;line-height:11.5px;font-weight:normal;color:#000;text-align:center;">Start</div>
<div class="r" style="left:962px;top:482px;width:1px;height:19px;background:#a0a0a0;"></div>
<div class="t" style="left:744.0px;width:400px;top:488.00px;font-size:11.5px;line-height:11.5px;font-weight:normal;color:#000;text-align:center;">Lower</div>
<div class="r" style="left:1000px;top:482px;width:1px;height:19px;background:#a0a0a0;"></div>
<div class="t" style="left:782.0px;width:400px;top:488.00px;font-size:11.5px;line-height:11.5px;font-weight:normal;color:#000;text-align:center;">Upper</div>
<div class="r" style="left:845px;top:502px;width:155px;height:18px;background:#ffffff;"></div>
<div class="r" style="left:866px;top:502px;width:1px;height:18px;background:#ebebeb;"></div>
<div class="r" style="left:886px;top:502px;width:1px;height:18px;background:#ebebeb;"></div>
<div class="r" style="left:924px;top:502px;width:1px;height:18px;background:#ebebeb;"></div>
<div class="r" style="left:962px;top:502px;width:1px;height:18px;background:#ebebeb;"></div>
<div class="r" style="left:1000px;top:502px;width:1px;height:18px;background:#ebebeb;"></div>
<div class="t" style="left:846px;top:506.00px;font-size:11px;line-height:11px;font-weight:normal;color:#000;">F</div>
<div class="r" style="left:870px;top:504px;width:13px;height:13px;background:#fff;border:1px solid #333;box-sizing:border-box;"></div>
<div class="t" style="right:298px;top:506.00px;font-size:11px;line-height:11px;font-weight:normal;color:#000;text-align:right;">0.1000</div>
<div class="t" style="right:260px;top:506.00px;font-size:11px;line-height:11px;font-weight:normal;color:#000;text-align:right;">0</div>
<div class="t" style="right:222px;top:506.00px;font-size:11px;line-height:11px;font-weight:normal;color:#000;text-align:right;">0.3000</div>
<div class="r" style="left:845px;top:520px;width:155px;height:18px;background:#f3f3f3;"></div>
<div class="r" style="left:866px;top:520px;width:1px;height:18px;background:#ebebeb;"></div>
<div class="r" style="left:886px;top:520px;width:1px;height:18px;background:#ebebeb;"></div>
<div class="r" style="left:924px;top:520px;width:1px;height:18px;background:#ebebeb;"></div>
<div class="r" style="left:962px;top:520px;width:1px;height:18px;background:#ebebeb;"></div>
<div class="r" style="left:1000px;top:520px;width:1px;height:18px;background:#ebebeb;"></div>
<div class="t" style="left:846px;top:524.00px;font-size:11px;line-height:11px;font-weight:normal;color:#000;">kr</div>
<div class="r" style="left:870px;top:522px;width:13px;height:13px;background:#fff;border:1px solid #333;box-sizing:border-box;"></div>
<div class="t" style="right:298px;top:524.00px;font-size:11px;line-height:11px;font-weight:normal;color:#000;text-align:right;">30</div>
<div class="t" style="right:260px;top:524.00px;font-size:11px;line-height:11px;font-weight:normal;color:#000;text-align:right;">0</div>
<div class="t" style="right:222px;top:524.00px;font-size:11px;line-height:11px;font-weight:normal;color:#000;text-align:right;">100</div>
<div class="r" style="left:845px;top:538px;width:155px;height:18px;background:#ffffff;"></div>
<div class="r" style="left:866px;top:538px;width:1px;height:18px;background:#ebebeb;"></div>
<div class="r" style="left:886px;top:538px;width:1px;height:18px;background:#ebebeb;"></div>
<div class="r" style="left:924px;top:538px;width:1px;height:18px;background:#ebebeb;"></div>
<div class="r" style="left:962px;top:538px;width:1px;height:18px;background:#ebebeb;"></div>
<div class="r" style="left:1000px;top:538px;width:1px;height:18px;background:#ebebeb;"></div>
<div class="t" style="left:846px;top:542.00px;font-size:11px;line-height:11px;font-weight:normal;color:#000;">R1f</div>
<div class="r" style="left:870px;top:540px;width:13px;height:13px;background:#fff;border:1px solid #333;box-sizing:border-box;"></div>
<div class="t" style="right:298px;top:542.00px;font-size:11px;line-height:11px;font-weight:normal;color:#000;text-align:right;">1</div>
<div class="t" style="right:260px;top:542.00px;font-size:11px;line-height:11px;font-weight:normal;color:#000;text-align:right;">0.2000</div>
<div class="t" style="right:222px;top:542.00px;font-size:11px;line-height:11px;font-weight:normal;color:#000;text-align:right;">3</div>
<div class="r" style="left:845px;top:556px;width:155px;height:18px;background:#f3f3f3;"></div>
<div class="r" style="left:866px;top:556px;width:1px;height:18px;background:#ebebeb;"></div>
<div class="r" style="left:886px;top:556px;width:1px;height:18px;background:#ebebeb;"></div>
<div class="r" style="left:924px;top:556px;width:1px;height:18px;background:#ebebeb;"></div>
<div class="r" style="left:962px;top:556px;width:1px;height:18px;background:#ebebeb;"></div>
<div class="r" style="left:1000px;top:556px;width:1px;height:18px;background:#ebebeb;"></div>
<div class="t" style="left:846px;top:560.00px;font-size:11px;line-height:11px;font-weight:normal;color:#000;">R1r</div>
<div class="r" style="left:870px;top:558px;width:13px;height:13px;background:#fff;border:1px solid #333;box-sizing:border-box;"></div>
<svg class="r" style="left:870px;top:558px" width="13" height="13"><polyline points="2.5,6.5 5,9.5 10.5,3" fill="none" stroke="#333" stroke-width="1.2"/></svg>
<div class="t" style="right:298px;top:560.00px;font-size:11px;line-height:11px;font-weight:normal;color:#000;text-align:right;">1</div>
<div class="t" style="right:260px;top:560.00px;font-size:11px;line-height:11px;font-weight:normal;color:#000;text-align:right;">0.2000</div>
<div class="t" style="right:222px;top:560.00px;font-size:11px;line-height:11px;font-weight:normal;color:#000;text-align:right;">3</div>
<div class="r" style="left:845px;top:574px;width:155px;height:18px;background:#ffffff;"></div>
<div class="r" style="left:866px;top:574px;width:1px;height:18px;background:#ebebeb;"></div>
<div class="r" style="left:886px;top:574px;width:1px;height:18px;background:#ebebeb;"></div>
<div class="r" style="left:924px;top:574px;width:1px;height:18px;background:#ebebeb;"></div>
<div class="r" style="left:962px;top:574px;width:1px;height:18px;background:#ebebeb;"></div>
<div class="r" style="left:1000px;top:574px;width:1px;height:18px;background:#ebebeb;"></div>
<div class="t" style="left:846px;top:578.00px;font-size:11px;line-height:11px;font-weight:normal;color:#000;">Sf</div>
<div class="r" style="left:870px;top:576px;width:13px;height:13px;background:#fff;border:1px solid #333;box-sizing:border-box;"></div>
<div class="t" style="left:889px;top:578.00px;font-size:11px;line-height:11px;font-weight:normal;color:#000;">-0.90...</div>
<div class="t" style="right:260px;top:578.00px;font-size:11px;line-height:11px;font-weight:normal;color:#000;text-align:right;">-1</div>
<div class="t" style="right:222px;top:578.00px;font-size:11px;line-height:11px;font-weight:normal;color:#000;text-align:right;">0</div>
<div class="r" style="left:845px;top:592px;width:155px;height:18px;background:#f3f3f3;"></div>
<div class="r" style="left:866px;top:592px;width:1px;height:18px;background:#ebebeb;"></div>
<div class="r" style="left:886px;top:592px;width:1px;height:18px;background:#ebebeb;"></div>
<div class="r" style="left:924px;top:592px;width:1px;height:18px;background:#ebebeb;"></div>
<div class="r" style="left:962px;top:592px;width:1px;height:18px;background:#ebebeb;"></div>
<div class="r" style="left:1000px;top:592px;width:1px;height:18px;background:#ebebeb;"></div>
<div class="t" style="left:846px;top:596.00px;font-size:11px;line-height:11px;font-weight:normal;color:#000;">Sr</div>
<div class="r" style="left:870px;top:594px;width:13px;height:13px;background:#fff;border:1px solid #333;box-sizing:border-box;"></div>
<svg class="r" style="left:870px;top:594px" width="13" height="13"><polyline points="2.5,6.5 5,9.5 10.5,3" fill="none" stroke="#333" stroke-width="1.2"/></svg>
<div class="t" style="right:298px;top:596.00px;font-size:11px;line-height:11px;font-weight:normal;color:#000;text-align:right;">0.6564</div>
<div class="t" style="right:260px;top:596.00px;font-size:11px;line-height:11px;font-weight:normal;color:#000;text-align:right;">0</div>
<div class="t" style="right:222px;top:596.00px;font-size:11px;line-height:11px;font-weight:normal;color:#000;text-align:right;">1</div>
<div class="r" style="left:845px;top:610px;width:155px;height:18px;background:#ffffff;"></div>
<div class="r" style="left:866px;top:610px;width:1px;height:18px;background:#ebebeb;"></div>
<div class="r" style="left:886px;top:610px;width:1px;height:18px;background:#ebebeb;"></div>
<div class="r" style="left:924px;top:610px;width:1px;height:18px;background:#ebebeb;"></div>
<div class="r" style="left:962px;top:610px;width:1px;height:18px;background:#ebebeb;"></div>
<div class="r" style="left:1000px;top:610px;width:1px;height:18px;background:#ebebeb;"></div>
<div class="t" style="left:846px;top:614.00px;font-size:11px;line-height:11px;font-weight:normal;color:#000;">M0f</div>
<div class="r" style="left:870px;top:612px;width:13px;height:13px;background:#fff;border:1px solid #333;box-sizing:border-box;"></div>
<div class="t" style="right:298px;top:614.00px;font-size:11px;line-height:11px;font-weight:normal;color:#000;text-align:right;">1</div>
<div class="t" style="right:260px;top:614.00px;font-size:11px;line-height:11px;font-weight:normal;color:#000;text-align:right;">0</div>
<div class="t" style="right:222px;top:614.00px;font-size:11px;line-height:11px;font-weight:normal;color:#000;text-align:right;">2</div>
<div class="r" style="left:845px;top:633px;width:13px;height:13px;background:#fff;border:1px solid #333;box-sizing:border-box;"></div>
<div class="t" style="left:862px;top:635.00px;font-size:11px;line-height:11px;font-weight:normal;color:#000;">Use R1 map</div>
<div class="r" style="left:932px;top:633px;width:13px;height:13px;background:#fff;border:1px solid #333;box-sizing:border-box;"></div>
<svg class="r" style="left:932px;top:633px" width="13" height="13"><polyline points="2.5,6.5 5,9.5 10.5,3" fill="none" stroke="#333" stroke-width="1.2"/></svg>
<div class="t" style="left:949px;top:635.00px;font-size:11px;line-height:11px;font-weight:normal;color:#000;">R1r = R1f</div>
<div class="r" style="left:843px;top:653px;width:40px;height:21px;background:#adadad;"></div>
<div class="r" style="left:844px;top:654px;width:38px;height:19px;background:#e1e1e1;"></div>
<div class="t" style="left:663.0px;width:400px;top:659.00px;font-size:11px;line-height:11px;font-weight:normal;color:#000;text-align:center;letter-spacing:-0.15px;">Reset</div>
<div class="r" style="left:884px;top:653px;width:40px;height:21px;background:#adadad;"></div>
<div class="r" style="left:885px;top:654px;width:38px;height:19px;background:#e1e1e1;"></div>
<div class="t" style="left:704.0px;width:400px;top:659.00px;font-size:11px;line-height:11px;font-weight:normal;color:#000;text-align:center;letter-spacing:-0.15px;">Save</div>
<div class="r" style="left:925px;top:653px;width:40px;height:21px;background:#adadad;"></div>
<div class="r" style="left:926px;top:654px;width:38px;height:19px;background:#e1e1e1;"></div>
<div class="t" style="left:745.0px;width:400px;top:659.00px;font-size:11px;line-height:11px;font-weight:normal;color:#000;text-align:center;letter-spacing:-0.15px;">Load</div>
<div class="r" style="left:966px;top:653px;width:40px;height:21px;background:#adadad;"></div>
<div class="r" style="left:967px;top:654px;width:38px;height:19px;background:#e1e1e1;"></div>
<div class="t" style="left:786.0px;width:400px;top:659.00px;font-size:11px;line-height:11px;font-weight:normal;color:#000;text-align:center;letter-spacing:-0.15px;">Default</div>
<div class="t" style="left:846px;top:681.00px;font-size:11px;line-height:11px;font-weight:normal;color:#000;">Current:</div>
<div class="t" style="left:895px;top:681.00px;font-size:11px;line-height:11px;font-weight:normal;color:#000;">DefaultFitOpt.mat</div>
<div class="r" style="left:1025px;top:49px;width:180px;height:651px;background:#fff;"></div>
<div class="r" style="left:1026px;top:50px;width:178px;height:649px;background:#a0a0a0;"></div>
<div class="r" style="left:1026px;top:50px;width:177px;height:648px;background:#f0f0f0;"></div>
<div class="r" style="left:1035px;top:39px;width:57px;height:11px;background:#fff;"></div>
<div class="r" style="left:1036px;top:40px;width:56px;height:11px;background:#f0f0f0;"></div>
<div class="t" style="left:1039px;top:41.00px;font-size:13px;line-height:13px;font-weight:bold;color:#000;">Protocol</div>
<div class="t" style="left:1036px;top:66.00px;font-size:11px;line-height:11px;font-weight:normal;color:#000;">Ti:</div>
<div class="t" style="left:1036px;top:88.00px;font-size:11px;line-height:11px;font-weight:normal;color:#000;">Td:</div>
<div class="r" style="left:1064px;top:59px;width:132px;height:22px;background:#fff;border:1px solid #a0a0a0;box-sizing:border-box;"></div>
<div class="r" style="left:1064px;top:83px;width:132px;height:22px;background:#fff;border:1px solid #a0a0a0;box-sizing:border-box;"></div>
<div class="r" style="left:1035px;top:108px;width:161px;height:20px;background:#adadad;"></div>
<div class="r" style="left:1036px;top:109px;width:159px;height:18px;background:#e1e1e1;"></div>
<div class="t" style="left:915.5px;width:400px;top:114.00px;font-size:11px;line-height:11px;font-weight:normal;color:#000;text-align:center;letter-spacing:-0.15px;">Set sequence</div>
<div class="r" style="left:1034px;top:135px;width:165px;height:305px;background:#f0f0f0;border:1px solid #a0a0a0;box-sizing:border-box;"></div>
<div class="r" style="left:1035px;top:136px;width:138px;height:19px;background:#f0f0f0;"></div>
<div class="r" style="left:1035px;top:155px;width:138px;height:1px;background:#a0a0a0;"></div>
<div class="r" style="left:1067px;top:136px;width:1px;height:19px;background:#a0a0a0;"></div>
<div class="r" style="left:1122px;top:136px;width:1px;height:19px;background:#a0a0a0;"></div>
<div class="r" style="left:1172px;top:136px;width:1px;height:19px;background:#a0a0a0;"></div>
<div class="t" style="left:895px;width:400px;top:142.00px;font-size:11.5px;line-height:11.5px;font-weight:normal;color:#000;text-align:center;">Ti</div>
<div class="t" style="left:947.5px;width:400px;top:142.00px;font-size:11.5px;line-height:11.5px;font-weight:normal;color:#000;text-align:center;">Td</div>
<div class="r" style="left:1035px;top:156px;width:163px;height:283px;overflow:hidden">
<div class="r" style="left:0;top:0px;width:33px;height:18px;background:#f0f0f0;border-right:1px solid #a0a0a0;border-bottom:1px solid #a0a0a0;box-sizing:border-box;"></div>
<div class="r" style="left:33px;top:0px;width:104px;height:18px;background:#ffffff;"></div>
<div class="r" style="left:87px;top:0px;width:1px;height:18px;background:#ebebeb;"></div>
<div class="t" style="left:0;width:33px;text-align:center;top:3.2px;font-size:12px;line-height:12px">1</div>
<div class="t" style="right:77px;top:3.7px;font-size:11px;line-height:11px">0.0030</div>
<div class="t" style="right:26px;top:3.7px;font-size:11px;line-height:11px">3.5000</div>
<div class="r" style="left:0;top:18px;width:33px;height:18px;background:#f0f0f0;border-right:1px solid #a0a0a0;border-bottom:1px solid #a0a0a0;box-sizing:border-box;"></div>
<div class="r" style="left:33px;top:18px;width:104px;height:18px;background:#f3f3f3;"></div>
<div class="r" style="left:87px;top:18px;width:1px;height:18px;background:#ebebeb;"></div>
<div class="t" style="left:0;width:33px;text-align:center;top:21.2px;font-size:12px;line-height:12px">2</div>
<div class="t" style="right:77px;top:21.7px;font-size:11px;line-height:11px">0.0037</div>
<div class="t" style="right:26px;top:21.7px;font-size:11px;line-height:11px">3.5000</div>
<div class="r" style="left:0;top:36px;width:33px;height:18px;background:#f0f0f0;border-right:1px solid #a0a0a0;border-bottom:1px solid #a0a0a0;box-sizing:border-box;"></div>
<div class="r" style="left:33px;top:36px;width:104px;height:18px;background:#ffffff;"></div>
<div class="r" style="left:87px;top:36px;width:1px;height:18px;background:#ebebeb;"></div>
<div class="t" style="left:0;width:33px;text-align:center;top:39.2px;font-size:12px;line-height:12px">3</div>
<div class="t" style="right:77px;top:39.7px;font-size:11px;line-height:11px">0.0047</div>
<div class="t" style="right:26px;top:39.7px;font-size:11px;line-height:11px">3.5000</div>
<div class="r" style="left:0;top:54px;width:33px;height:18px;background:#f0f0f0;border-right:1px solid #a0a0a0;border-bottom:1px solid #a0a0a0;box-sizing:border-box;"></div>
<div class="r" style="left:33px;top:54px;width:104px;height:18px;background:#f3f3f3;"></div>
<div class="r" style="left:87px;top:54px;width:1px;height:18px;background:#ebebeb;"></div>
<div class="t" style="left:0;width:33px;text-align:center;top:57.2px;font-size:12px;line-height:12px">4</div>
<div class="t" style="right:77px;top:57.7px;font-size:11px;line-height:11px">0.0058</div>
<div class="t" style="right:26px;top:57.7px;font-size:11px;line-height:11px">3.5000</div>
<div class="r" style="left:0;top:72px;width:33px;height:18px;background:#f0f0f0;border-right:1px solid #a0a0a0;border-bottom:1px solid #a0a0a0;box-sizing:border-box;"></div>
<div class="r" style="left:33px;top:72px;width:104px;height:18px;background:#ffffff;"></div>
<div class="r" style="left:87px;top:72px;width:1px;height:18px;background:#ebebeb;"></div>
<div class="t" style="left:0;width:33px;text-align:center;top:75.2px;font-size:12px;line-height:12px">5</div>
<div class="t" style="right:77px;top:75.7px;font-size:11px;line-height:11px">0.0072</div>
<div class="t" style="right:26px;top:75.7px;font-size:11px;line-height:11px">3.5000</div>
<div class="r" style="left:0;top:90px;width:33px;height:18px;background:#f0f0f0;border-right:1px solid #a0a0a0;border-bottom:1px solid #a0a0a0;box-sizing:border-box;"></div>
<div class="r" style="left:33px;top:90px;width:104px;height:18px;background:#f3f3f3;"></div>
<div class="r" style="left:87px;top:90px;width:1px;height:18px;background:#ebebeb;"></div>
<div class="t" style="left:0;width:33px;text-align:center;top:93.2px;font-size:12px;line-height:12px">6</div>
<div class="t" style="right:77px;top:93.7px;font-size:11px;line-height:11px">0.0090</div>
<div class="t" style="right:26px;top:93.7px;font-size:11px;line-height:11px">3.5000</div>
<div class="r" style="left:0;top:108px;width:33px;height:18px;background:#f0f0f0;border-right:1px solid #a0a0a0;border-bottom:1px solid #a0a0a0;box-sizing:border-box;"></div>
<div class="r" style="left:33px;top:108px;width:104px;height:18px;background:#ffffff;"></div>
<div class="r" style="left:87px;top:108px;width:1px;height:18px;background:#ebebeb;"></div>
<div class="t" style="left:0;width:33px;text-align:center;top:111.2px;font-size:12px;line-height:12px">7</div>
<div class="t" style="right:77px;top:111.7px;font-size:11px;line-height:11px">0.0112</div>
<div class="t" style="right:26px;top:111.7px;font-size:11px;line-height:11px">3.5000</div>
<div class="r" style="left:0;top:126px;width:33px;height:18px;background:#f0f0f0;border-right:1px solid #a0a0a0;border-bottom:1px solid #a0a0a0;box-sizing:border-box;"></div>
<div class="r" style="left:33px;top:126px;width:104px;height:18px;background:#f3f3f3;"></div>
<div class="r" style="left:87px;top:126px;width:1px;height:18px;background:#ebebeb;"></div>
<div class="t" style="left:0;width:33px;text-align:center;top:129.2px;font-size:12px;line-height:12px">8</div>
<div class="t" style="right:77px;top:129.7px;font-size:11px;line-height:11px">0.0139</div>
<div class="t" style="right:26px;top:129.7px;font-size:11px;line-height:11px">3.5000</div>
<div class="r" style="left:0;top:144px;width:33px;height:18px;background:#f0f0f0;border-right:1px solid #a0a0a0;border-bottom:1px solid #a0a0a0;box-sizing:border-box;"></div>
<div class="r" style="left:33px;top:144px;width:104px;height:18px;background:#ffffff;"></div>
<div class="r" style="left:87px;top:144px;width:1px;height:18px;background:#ebebeb;"></div>
<div class="t" style="left:0;width:33px;text-align:center;top:147.2px;font-size:12px;line-height:12px">9</div>
<div class="t" style="right:77px;top:147.7px;font-size:11px;line-height:11px">0.0173</div>
<div class="t" style="right:26px;top:147.7px;font-size:11px;line-height:11px">3.5000</div>
<div class="r" style="left:0;top:162px;width:33px;height:18px;background:#f0f0f0;border-right:1px solid #a0a0a0;border-bottom:1px solid #a0a0a0;box-sizing:border-box;"></div>
<div class="r" style="left:33px;top:162px;width:104px;height:18px;background:#f3f3f3;"></div>
<div class="r" style="left:87px;top:162px;width:1px;height:18px;background:#ebebeb;"></div>
<div class="t" style="left:0;width:33px;text-align:center;top:165.2px;font-size:12px;line-height:12px">10</div>
<div class="t" style="right:77px;top:165.7px;font-size:11px;line-height:11px">0.0216</div>
<div class="t" style="right:26px;top:165.7px;font-size:11px;line-height:11px">3.5000</div>
<div class="r" style="left:0;top:180px;width:33px;height:18px;background:#f0f0f0;border-right:1px solid #a0a0a0;border-bottom:1px solid #a0a0a0;box-sizing:border-box;"></div>
<div class="r" style="left:33px;top:180px;width:104px;height:18px;background:#ffffff;"></div>
<div class="r" style="left:87px;top:180px;width:1px;height:18px;background:#ebebeb;"></div>
<div class="t" style="left:0;width:33px;text-align:center;top:183.2px;font-size:12px;line-height:12px">11</div>
<div class="t" style="right:77px;top:183.7px;font-size:11px;line-height:11px">0.0269</div>
<div class="t" style="right:26px;top:183.7px;font-size:11px;line-height:11px">3.5000</div>
<div class="r" style="left:0;top:198px;width:33px;height:18px;background:#f0f0f0;border-right:1px solid #a0a0a0;border-bottom:1px solid #a0a0a0;box-sizing:border-box;"></div>
<div class="r" style="left:33px;top:198px;width:104px;height:18px;background:#f3f3f3;"></div>
<div class="r" style="left:87px;top:198px;width:1px;height:18px;background:#ebebeb;"></div>
<div class="t" style="left:0;width:33px;text-align:center;top:201.2px;font-size:12px;line-height:12px">12</div>
<div class="t" style="right:77px;top:201.7px;font-size:11px;line-height:11px">0.0335</div>
<div class="t" style="right:26px;top:201.7px;font-size:11px;line-height:11px">3.5000</div>
<div class="r" style="left:0;top:216px;width:33px;height:18px;background:#f0f0f0;border-right:1px solid #a0a0a0;border-bottom:1px solid #a0a0a0;box-sizing:border-box;"></div>
<div class="r" style="left:33px;top:216px;width:104px;height:18px;background:#ffffff;"></div>
<div class="r" style="left:87px;top:216px;width:1px;height:18px;background:#ebebeb;"></div>
<div class="t" style="left:0;width:33px;text-align:center;top:219.2px;font-size:12px;line-height:12px">13</div>
<div class="t" style="right:77px;top:219.7px;font-size:11px;line-height:11px">0.0417</div>
<div class="t" style="right:26px;top:219.7px;font-size:11px;line-height:11px">3.5000</div>
<div class="r" style="left:0;top:234px;width:33px;height:18px;background:#f0f0f0;border-right:1px solid #a0a0a0;border-bottom:1px solid #a0a0a0;box-sizing:border-box;"></div>
<div class="r" style="left:33px;top:234px;width:104px;height:18px;background:#f3f3f3;"></div>
<div class="r" style="left:87px;top:234px;width:1px;height:18px;background:#ebebeb;"></div>
<div class="t" style="left:0;width:33px;text-align:center;top:237.2px;font-size:12px;line-height:12px">14</div>
<div class="t" style="right:77px;top:237.7px;font-size:11px;line-height:11px">0.0519</div>
<div class="t" style="right:26px;top:237.7px;font-size:11px;line-height:11px">3.5000</div>
<div class="r" style="left:0;top:252px;width:33px;height:18px;background:#f0f0f0;border-right:1px solid #a0a0a0;border-bottom:1px solid #a0a0a0;box-sizing:border-box;"></div>
<div class="r" style="left:33px;top:252px;width:104px;height:18px;background:#ffffff;"></div>
<div class="r" style="left:87px;top:252px;width:1px;height:18px;background:#ebebeb;"></div>
<div class="t" style="left:0;width:33px;text-align:center;top:255.2px;font-size:12px;line-height:12px">15</div>
<div class="t" style="right:77px;top:255.7px;font-size:11px;line-height:11px">0.0646</div>
<div class="t" style="right:26px;top:255.7px;font-size:11px;line-height:11px">3.5000</div>
<div class="r" style="left:0;top:270px;width:33px;height:18px;background:#f0f0f0;border-right:1px solid #a0a0a0;border-bottom:1px solid #a0a0a0;box-sizing:border-box;"></div>
<div class="r" style="left:33px;top:270px;width:104px;height:18px;background:#f3f3f3;"></div>
<div class="r" style="left:87px;top:270px;width:1px;height:18px;background:#ebebeb;"></div>
<div class="t" style="left:0;width:33px;text-align:center;top:273.2px;font-size:12px;line-height:12px">16</div>
<div class="t" style="right:77px;top:273.7px;font-size:11px;line-height:11px">0.0805</div>
<div class="t" style="right:26px;top:273.7px;font-size:11px;line-height:11px">3.5000</div>
</div>
<div class="r" style="left:1181px;top:156px;width:17px;height:283px;background:#f0f0f0;"></div>
<div class="r" style="left:1181px;top:156px;width:1px;height:283px;background:#fff;"></div>
<div class="r" style="left:1182px;top:173px;width:15px;height:155px;background:#cdcdcd;"></div>
<svg class="r" style="left:1181px;top:158px" width="17" height="14"><polyline points="5,9.6 8.45,5.2 11.9,9.6" fill="none" stroke="#555" stroke-width="2"/></svg>
<svg class="r" style="left:1181px;top:423px" width="17" height="14"><polyline points="5,5.4 8.45,9.8 11.9,5.4" fill="none" stroke="#555" stroke-width="2"/></svg>
<div class="r" style="left:1035px;top:448px;width:79px;height:21px;background:#adadad;"></div>
<div class="r" style="left:1036px;top:449px;width:77px;height:19px;background:#e1e1e1;"></div>
<div class="t" style="left:874.5px;width:400px;top:454.00px;font-size:11px;line-height:11px;font-weight:normal;color:#000;text-align:center;letter-spacing:-0.15px;">Add Point</div>
<div class="r" style="left:1119px;top:448px;width:78px;height:21px;background:#adadad;"></div>
<div class="r" style="left:1120px;top:449px;width:76px;height:19px;background:#e1e1e1;"></div>
<div class="t" style="left:958.0px;width:400px;top:454.00px;font-size:11px;line-height:11px;font-weight:normal;color:#000;text-align:center;letter-spacing:-0.15px;">Remove Point</div>
<div class="r" style="left:1035px;top:472px;width:79px;height:21px;background:#adadad;"></div>
<div class="r" style="left:1036px;top:473px;width:77px;height:19px;background:#e1e1e1;"></div>
<div class="t" style="left:874.5px;width:400px;top:478.00px;font-size:11px;line-height:11px;font-weight:normal;color:#000;text-align:center;letter-spacing:-0.15px;">Move Up</div>
<div class="r" style="left:1119px;top:472px;width:78px;height:21px;background:#adadad;"></div>
<div class="r" style="left:1120px;top:473px;width:76px;height:19px;background:#e1e1e1;"></div>
<div class="t" style="left:958.0px;width:400px;top:478.00px;font-size:11px;line-height:11px;font-weight:normal;color:#000;text-align:center;letter-spacing:-0.15px;">Move Down</div>
<div class="t" style="left:1035px;top:506.00px;font-size:11.5px;line-height:11.5px;font-weight:bold;color:#000;">Inversion pulse:</div>
<div class="t" style="left:1035px;top:526.00px;font-size:11px;line-height:11px;font-weight:normal;color:#000;">Pulse shape:</div>
<div class="r" style="left:1111px;top:520px;width:84px;height:22px;background:#fff;border:1px solid #a5a7ab;box-sizing:border-box;"></div>
<div class="r" style="left:1179px;top:521px;width:15px;height:20px;background:#e0e0e0;"></div>
<svg class="r" style="left:1179px;top:525px" width="14" height="12"><polyline points="3.2,4.2 7,8 10.8,4.2" fill="none" stroke="#444" stroke-width="1.25"/></svg>
<div class="t" style="left:1114px;top:527.00px;font-size:11px;line-height:11px;font-weight:normal;color:#000;">hard</div>
<div class="t" style="left:1035px;top:545.00px;font-size:11px;line-height:11px;font-weight:normal;color:#000;">Duration (s):</div>
<div class="r" style="left:1113px;top:544px;width:82px;height:22px;background:#fff;border:1px solid #a0a0a0;box-sizing:border-box;"></div>
<div class="t" style="left:953.5px;width:400px;top:550.00px;font-size:11px;line-height:11px;font-weight:normal;color:#000;text-align:center;">0.001</div>
<div class="t" style="left:1035px;top:574.00px;font-size:11.5px;line-height:11.5px;font-weight:bold;color:#000;">FSE sequence:</div>
<div class="r" style="left:1035px;top:589px;width:161px;height:62px;background:#f0f0f0;border:1px solid #a0a0a0;box-sizing:border-box;"></div>
<div class="r" style="left:1036px;top:590px;width:77px;height:18px;background:#f0f0f0;border-right:1px solid #a0a0a0;border-bottom:1px solid #a0a0a0;box-sizing:border-box;"></div>
<div class="r" style="left:1113px;top:590px;width:74px;height:18px;background:#ffffff;"></div>
<div class="t" style="left:874.5px;width:400px;top:593.00px;font-size:12px;line-height:12px;font-weight:normal;color:#000;text-align:center;">Trf (s)</div>
<div class="t" style="right:35px;top:594.00px;font-size:11px;line-height:11px;font-weight:normal;color:#000;text-align:right;">1.0000e-03</div>
<div class="r" style="left:1036px;top:608px;width:77px;height:18px;background:#f0f0f0;border-right:1px solid #a0a0a0;border-bottom:1px solid #a0a0a0;box-sizing:border-box;"></div>
<div class="r" style="left:1113px;top:608px;width:74px;height:18px;background:#f3f3f3;"></div>
<div class="t" style="left:874.5px;width:400px;top:611.00px;font-size:12px;line-height:12px;font-weight:normal;color:#000;text-align:center;">Tr (s)</div>
<div class="t" style="right:35px;top:612.00px;font-size:11px;line-height:11px;font-weight:normal;color:#000;text-align:right;">0.0100</div>
<div class="r" style="left:1036px;top:626px;width:77px;height:18px;background:#f0f0f0;border-right:1px solid #a0a0a0;border-bottom:1px solid #a0a0a0;box-sizing:border-box;"></div>
<div class="r" style="left:1113px;top:626px;width:74px;height:18px;background:#ffffff;"></div>
<div class="t" style="left:874.5px;width:400px;top:629.00px;font-size:12px;line-height:12px;font-weight:normal;color:#000;text-align:center;">Npulse</div>
<div class="t" style="right:35px;top:630.00px;font-size:11px;line-height:11px;font-weight:normal;color:#000;text-align:right;">16</div>
<div class="r" style="left:1034px;top:656px;width:40px;height:21px;background:#adadad;"></div>
<div class="r" style="left:1035px;top:657px;width:38px;height:19px;background:#e1e1e1;"></div>
<div class="t" style="left:854.0px;width:400px;top:662.00px;font-size:11px;line-height:11px;font-weight:normal;color:#000;text-align:center;letter-spacing:-0.15px;">Reset</div>
<div class="r" style="left:1075px;top:656px;width:40px;height:21px;background:#adadad;"></div>
<div class="r" style="left:1076px;top:657px;width:38px;height:19px;background:#e1e1e1;"></div>
<div class="t" style="left:895.0px;width:400px;top:662.00px;font-size:11px;line-height:11px;font-weight:normal;color:#000;text-align:center;letter-spacing:-0.15px;">Save</div>
<div class="r" style="left:1116px;top:656px;width:40px;height:21px;background:#adadad;"></div>
<div class="r" style="left:1117px;top:657px;width:38px;height:19px;background:#e1e1e1;"></div>
<div class="t" style="left:936.0px;width:400px;top:662.00px;font-size:11px;line-height:11px;font-weight:normal;color:#000;text-align:center;letter-spacing:-0.15px;">Load</div>
<div class="r" style="left:1157px;top:656px;width:40px;height:21px;background:#adadad;"></div>
<div class="r" style="left:1158px;top:657px;width:38px;height:19px;background:#e1e1e1;"></div>
<div class="t" style="left:977.0px;width:400px;top:662.00px;font-size:11px;line-height:11px;font-weight:normal;color:#000;text-align:center;letter-spacing:-0.15px;">Default</div>
<div class="t" style="left:1038px;top:683.00px;font-size:11px;line-height:11px;font-weight:normal;color:#000;">Current:</div>
<div class="t" style="left:1087px;top:683.00px;font-size:11px;line-height:11px;font-weight:normal;color:#000;">DefaultProt.mat</div>
</body></html>
